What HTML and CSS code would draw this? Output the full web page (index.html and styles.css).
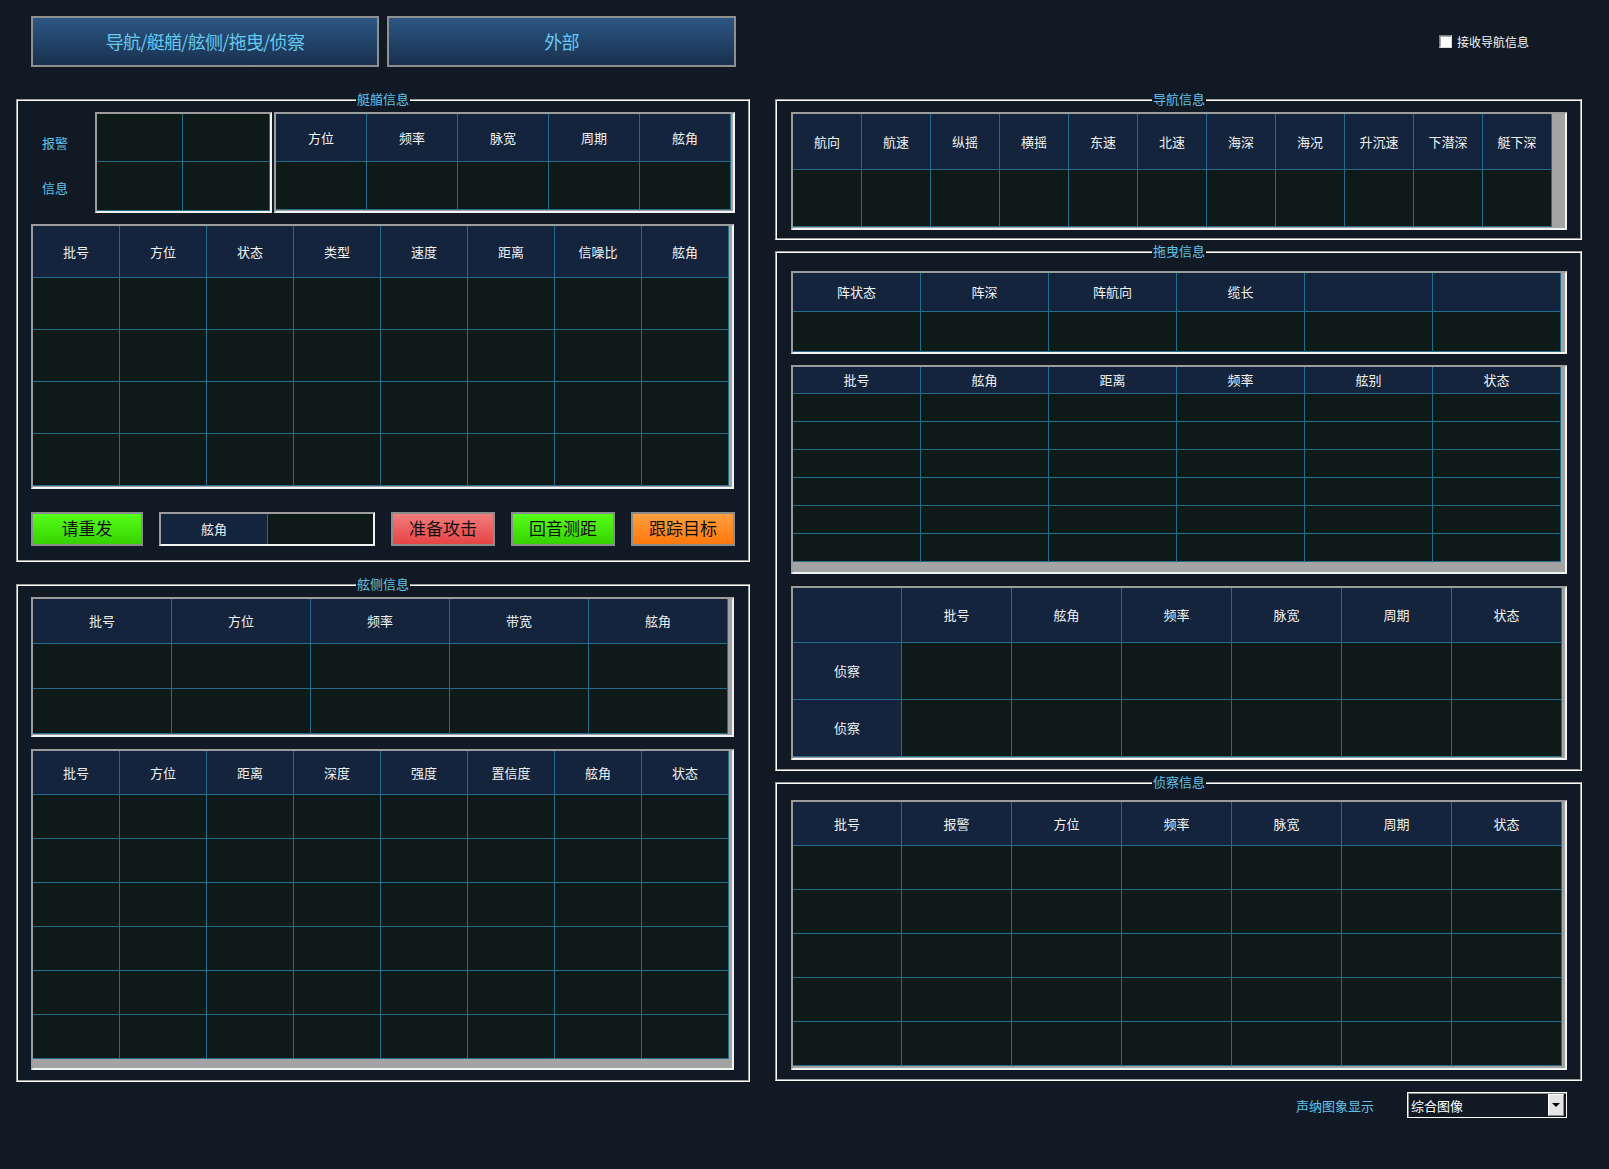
FILE: index.html
```html
<!DOCTYPE html>
<html lang="zh-CN">
<head>
<meta charset="utf-8">
<title>声纳信息显示</title>
<link rel="stylesheet" href="styles.css">
</head>
<body>
<div class="page">
  <div class="topbar">
    <button class="tab tab-main">导航/艇艏/舷侧/拖曳/侦察</button>
    <button class="tab tab-ext">外部</button>
    <label class="recv"><span class="chk"></span>接收导航信息</label>
  </div>

  <div class="main">
    <div class="col left">
      <fieldset class="frame f-bow">
        <legend>艇艏信息</legend>
        <div class="bow-top">
          <div class="alarm-labels"><span>报警</span><span>信息</span></div>
          <div class="grid g-alarm">
            <div class="c"></div><div class="c"></div>
            <div class="c"></div><div class="c"></div>
          </div>
          <div class="grid g-bowinfo">
            <div class="h">方位</div><div class="h">频率</div><div class="h">脉宽</div><div class="h">周期</div><div class="h">舷角</div>
            <div class="c"></div><div class="c"></div><div class="c"></div><div class="c"></div><div class="c"></div>
          </div>
        </div>
        <div class="grid g-bow">
          <div class="h">批号</div><div class="h">方位</div><div class="h">状态</div><div class="h">类型</div><div class="h">速度</div><div class="h">距离</div><div class="h">信噪比</div><div class="h">舷角</div>
          <div class="c"></div><div class="c"></div><div class="c"></div><div class="c"></div><div class="c"></div><div class="c"></div><div class="c"></div><div class="c"></div>
          <div class="c"></div><div class="c"></div><div class="c"></div><div class="c"></div><div class="c"></div><div class="c"></div><div class="c"></div><div class="c"></div>
          <div class="c"></div><div class="c"></div><div class="c"></div><div class="c"></div><div class="c"></div><div class="c"></div><div class="c"></div><div class="c"></div>
          <div class="c"></div><div class="c"></div><div class="c"></div><div class="c"></div><div class="c"></div><div class="c"></div><div class="c"></div><div class="c"></div>
        </div>
        <div class="actions">
          <button class="btn btn-green btn-resend">请重发</button>
          <div class="angle"><div class="lbl">舷角</div><div class="val"></div></div>
          <button class="btn btn-red">准备攻击</button>
          <button class="btn btn-green">回音测距</button>
          <button class="btn btn-orange">跟踪目标</button>
        </div>
      </fieldset>

      <fieldset class="frame f-side">
        <legend>舷侧信息</legend>
        <div class="grid g-side1">
          <div class="h">批号</div><div class="h">方位</div><div class="h">频率</div><div class="h">带宽</div><div class="h">舷角</div>
          <div class="c"></div><div class="c"></div><div class="c"></div><div class="c"></div><div class="c"></div>
          <div class="c"></div><div class="c"></div><div class="c"></div><div class="c"></div><div class="c"></div>
        </div>
        <div class="grid g-side2">
          <div class="h">批号</div><div class="h">方位</div><div class="h">距离</div><div class="h">深度</div><div class="h">强度</div><div class="h">置信度</div><div class="h">舷角</div><div class="h">状态</div>
          <div class="c"></div><div class="c"></div><div class="c"></div><div class="c"></div><div class="c"></div><div class="c"></div><div class="c"></div><div class="c"></div>
          <div class="c"></div><div class="c"></div><div class="c"></div><div class="c"></div><div class="c"></div><div class="c"></div><div class="c"></div><div class="c"></div>
          <div class="c"></div><div class="c"></div><div class="c"></div><div class="c"></div><div class="c"></div><div class="c"></div><div class="c"></div><div class="c"></div>
          <div class="c"></div><div class="c"></div><div class="c"></div><div class="c"></div><div class="c"></div><div class="c"></div><div class="c"></div><div class="c"></div>
          <div class="c"></div><div class="c"></div><div class="c"></div><div class="c"></div><div class="c"></div><div class="c"></div><div class="c"></div><div class="c"></div>
          <div class="c"></div><div class="c"></div><div class="c"></div><div class="c"></div><div class="c"></div><div class="c"></div><div class="c"></div><div class="c"></div>
        </div>
      </fieldset>
    </div>

    <div class="col right">
      <fieldset class="frame rframe f-nav">
        <legend>导航信息</legend>
        <div class="grid g-nav">
          <div class="h">航向</div><div class="h">航速</div><div class="h">纵摇</div><div class="h">横摇</div><div class="h">东速</div><div class="h">北速</div><div class="h">海深</div><div class="h">海况</div><div class="h">升沉速</div><div class="h">下潜深</div><div class="h">艇下深</div>
          <div class="c"></div><div class="c"></div><div class="c"></div><div class="c"></div><div class="c"></div><div class="c"></div><div class="c"></div><div class="c"></div><div class="c"></div><div class="c"></div><div class="c"></div>
        </div>
      </fieldset>

      <fieldset class="frame rframe f-tow">
        <legend>拖曳信息</legend>
        <div class="grid g-tow1">
          <div class="h">阵状态</div><div class="h">阵深</div><div class="h">阵航向</div><div class="h">缆长</div><div class="h"></div><div class="h"></div>
          <div class="c"></div><div class="c"></div><div class="c"></div><div class="c"></div><div class="c"></div><div class="c"></div>
        </div>
        <div class="grid g-tow2">
          <div class="h">批号</div><div class="h">舷角</div><div class="h">距离</div><div class="h">频率</div><div class="h">舷别</div><div class="h">状态</div>
          <div class="c"></div><div class="c"></div><div class="c"></div><div class="c"></div><div class="c"></div><div class="c"></div>
          <div class="c"></div><div class="c"></div><div class="c"></div><div class="c"></div><div class="c"></div><div class="c"></div>
          <div class="c"></div><div class="c"></div><div class="c"></div><div class="c"></div><div class="c"></div><div class="c"></div>
          <div class="c"></div><div class="c"></div><div class="c"></div><div class="c"></div><div class="c"></div><div class="c"></div>
          <div class="c"></div><div class="c"></div><div class="c"></div><div class="c"></div><div class="c"></div><div class="c"></div>
          <div class="c"></div><div class="c"></div><div class="c"></div><div class="c"></div><div class="c"></div><div class="c"></div>
        </div>
        <div class="grid g-tow3">
          <div class="h"></div><div class="h">批号</div><div class="h">舷角</div><div class="h">频率</div><div class="h">脉宽</div><div class="h">周期</div><div class="h">状态</div>
          <div class="h">侦察</div><div class="c"></div><div class="c"></div><div class="c"></div><div class="c"></div><div class="c"></div><div class="c"></div>
          <div class="h">侦察</div><div class="c"></div><div class="c"></div><div class="c"></div><div class="c"></div><div class="c"></div><div class="c"></div>
        </div>
      </fieldset>

      <fieldset class="frame rframe f-recon">
        <legend>侦察信息</legend>
        <div class="grid g-recon">
          <div class="h">批号</div><div class="h">报警</div><div class="h">方位</div><div class="h">频率</div><div class="h">脉宽</div><div class="h">周期</div><div class="h">状态</div>
          <div class="c"></div><div class="c"></div><div class="c"></div><div class="c"></div><div class="c"></div><div class="c"></div><div class="c"></div>
          <div class="c"></div><div class="c"></div><div class="c"></div><div class="c"></div><div class="c"></div><div class="c"></div><div class="c"></div>
          <div class="c"></div><div class="c"></div><div class="c"></div><div class="c"></div><div class="c"></div><div class="c"></div><div class="c"></div>
          <div class="c"></div><div class="c"></div><div class="c"></div><div class="c"></div><div class="c"></div><div class="c"></div><div class="c"></div>
          <div class="c"></div><div class="c"></div><div class="c"></div><div class="c"></div><div class="c"></div><div class="c"></div><div class="c"></div>
        </div>
      </fieldset>

      <div class="sonar">
        <span class="sonar-label">声纳图象显示</span>
        <div class="select"><span>综合图像</span><span class="arrow"><i class="tri"></i></span></div>
      </div>
    </div>
  </div>
</div>
</body>
</html>
```

FILE: styles.css
```css
* { box-sizing: border-box; }
html, body { margin: 0; padding: 0; }
body {
  background: #111a24;
  width: 1609px;
  height: 1169px;
  overflow: hidden;
  font-family: "Noto Sans CJK SC", "Microsoft YaHei", sans-serif;
  font-size: 13px;
  color: #f0f0f0;
}
.page { padding: 16px 0 0 16px; }

/* top bar */
.topbar { display: flex; align-items: center; padding-left: 15px; height: 51px; }
.tab {
  width: 348px; height: 51px; padding: 0 0 2px;
  border: 2px solid #8f8f8f;
  background: linear-gradient(#2c5783, #19304f);
  color: #66c9f0;
  font-family: inherit; font-size: 18px; letter-spacing: -0.7px;
}
.tab-ext { margin-left: 8px; width: 349px; }
.recv { margin-left: 703px; display: flex; align-items: center; gap: 5px; color: #f4f4f4; font-size: 12px; }
.chk {
  width: 13px; height: 13px; background: #fff;
  border: 1px solid; border-color: #7c7c7c #dcdcdc #dcdcdc #7c7c7c;
  box-shadow: inset 1px 1px 0 #a8a8a8;
}

/* columns */
.main { display: flex; gap: 25px; margin-top: 25px; align-items: flex-start; }
.left { width: 734px; }
.right { width: 807px; }

/* group frames */
.frame {
  margin: 0; min-width: 0;
  border: 1px solid; border-color: #9c9c9c #fff #fff #9c9c9c;
  box-shadow: inset 1px 1px 0 #fff, inset -1px -1px 0 #9c9c9c;
  padding: 6px 14px 15px 14px;
}
.frame legend {
  margin: 0 auto; padding: 0 1px;
  font-size: 13px; line-height: 14px;
  color: #5fc2ea; background: #111a24;
}
.rframe { padding-left: 15px; padding-right: 14px; }
.f-side { margin-top: 15px; padding-bottom: 11px; }
.f-nav { padding-bottom: 9px; }
.f-tow { margin-top: 4px; padding-top: 13px; padding-bottom: 10px; }
.f-recon { margin-top: 4px; padding-top: 11px; padding-bottom: 10px; }

/* grids */
.grid {
  display: grid; align-content: start; justify-content: start;
  border: 2px solid; border-color: #9c9c9c #f2f2f2 #f2f2f2 #9c9c9c;
  background: #a3a3a3;
}
.h, .c {
  border-right: 1px solid #246c8c; border-bottom: 1px solid #246c8c;
  display: flex; align-items: center; justify-content: center;
}
.h { background: #13243c; color: #f2f2f2; padding-bottom: 1px; }
.c { background: #0d1a18; }

.bow-top { display: flex; height: 101px; }
.alarm-labels {
  width: 64px; padding: 22px 0 0 11px;
  display: flex; flex-direction: column; gap: 28px;
  color: #5fc2ea; line-height: 17px;
}
.g-alarm { width: 177px; height: 101px; grid-template-columns: 86px 87px; grid-template-rows: 48px 49px; }
.g-bowinfo { width: 461px; height: 101px; margin-left: 2px; grid-template-columns: repeat(5, 91px); grid-template-rows: 48px 48px; }
.g-bow { width: 703px; height: 265px; margin-top: 11px; grid-template-columns: repeat(8, 87px); grid-template-rows: repeat(5, 52px); }

.actions { display: flex; justify-content: space-between; margin-top: 23px; height: 34px; }
.btn {
  height: 34px; width: 104px; padding: 0 0 3px;
  border: 2px solid #8c8c8c;
  font-family: inherit; font-size: 17px; color: #111;
}
.btn-resend { width: 112px; }
.btn-green { background: linear-gradient(#55ff18, #36d200); }
.btn-red { background: linear-gradient(#f37c7c, #e64444); }
.btn-orange { background: linear-gradient(#ff9e3e, #ff780c); }
.angle {
  width: 216px; display: grid; grid-template-columns: 107px 1fr;
  border: 2px solid; border-color: #9c9c9c #f2f2f2 #f2f2f2 #9c9c9c;
}
.angle .lbl { background: #13243c; border-right: 1px solid #246c8c; display: flex; align-items: center; justify-content: center; padding-bottom: 2px; }
.angle .val { background: #0d1a18; }

.g-side1 { width: 703px; height: 140px; grid-template-columns: repeat(5, 139px); grid-template-rows: repeat(3, 45px); }
.g-side2 { width: 703px; height: 321px; margin-top: 12px; grid-template-columns: repeat(8, 87px); grid-template-rows: repeat(7, 44px); }

.g-nav { width: 776px; height: 118px; grid-template-columns: repeat(11, 69px); grid-template-rows: 56px 57px; }
.g-tow1 { width: 776px; height: 83px; grid-template-columns: repeat(6, 128px); grid-template-rows: 39px 40px; }
.g-tow2 { width: 776px; height: 209px; margin-top: 11px; grid-template-columns: repeat(6, 128px); grid-template-rows: 27px repeat(6, 28px); }
.g-tow3 { width: 776px; height: 174px; margin-top: 12px; grid-template-columns: 109px repeat(6, 110px); grid-template-rows: 55px 57px 57px; }
.g-recon { width: 776px; height: 270px; grid-template-columns: 109px repeat(6, 110px); grid-template-rows: repeat(6, 44px); }

/* sonar image selector */
.sonar { display: flex; justify-content: flex-end; align-items: center; gap: 33px; margin-top: 11px; padding-right: 15px; }
.sonar-label { color: #5fc2ea; }
.select {
  width: 160px; height: 26px;
  border: 1px solid #fff; box-shadow: inset 1px 1px 0 #8a8a8a;
  display: flex; align-items: center; padding: 0 2px 0 3px;
  color: #fff;
}
.arrow {
  margin-left: auto; width: 16px; height: 22px;
  background: #e4e4e4;
  border: 1px solid; border-color: #fff #8a8a8a #8a8a8a #fff;
  display: flex; align-items: center; justify-content: center;
}
.tri { width: 0; height: 0; border-left: 4px solid transparent; border-right: 4px solid transparent; border-top: 4px solid #000; }
```
